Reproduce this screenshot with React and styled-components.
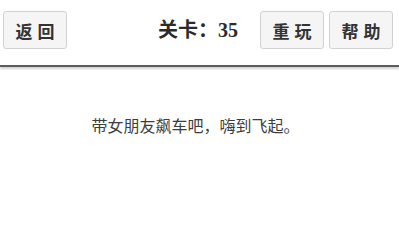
import styled, { createGlobalStyle } from 'styled-components'

const GlobalStyle = createGlobalStyle`
  html, body {
    margin: 0;
    padding: 0;
    background: #ffffff;
  }
  body {
    font-family: "Liberation Serif", "Noto Sans CJK SC", serif;
    color: #333333;
  }
`

const Page = styled.div`
  width: 399px;
  height: 229px;
  overflow: hidden;
`

const Header = styled.header`
  display: grid;
  grid-template-columns: 1fr auto 1fr;
  align-items: start;
  height: 54px;
  padding: 11px 6px 0 3px;
  border-bottom: 2px solid #5c5c5c;
  box-shadow: 0 2px 2px rgba(0, 0, 0, 0.18);
`

const ButtonGroup = styled.div`
  display: flex;
  gap: 5px;
  justify-content: ${(props) => (props.end ? 'flex-end' : 'flex-start')};
`

const GameButton = styled.button`
  width: 64px;
  height: 38px;
  padding: 0 0 0 5px;
  border: 1px solid #d2d2d2;
  border-radius: 3px;
  background: #f5f5f5;
  font-family: "Noto Sans CJK SC", sans-serif;
  font-size: 17px;
  font-weight: 700;
  letter-spacing: 5px;
  color: #333333;
  cursor: pointer;
`

const Title = styled.h1`
  margin: 0;
  line-height: 38px;
  font-family: "Liberation Serif", "Noto Sans CJK SC", serif;
  font-size: 20px;
  font-weight: 700;
  color: #2b2b2b;
`

const Message = styled.p`
  margin: 46px 0 0;
  padding-right: 8px;
  text-align: center;
  font-family: "Noto Sans CJK SC", sans-serif;
  font-size: 16px;
  color: #3d3d3d;
`

export default function App() {
  return (
    <Page>
      <GlobalStyle />
      <Header>
        <ButtonGroup>
          <GameButton>返回</GameButton>
        </ButtonGroup>
        <Title>关卡：35</Title>
        <ButtonGroup end>
          <GameButton>重玩</GameButton>
          <GameButton>帮助</GameButton>
        </ButtonGroup>
      </Header>
      <Message>带女朋友飙车吧，嗨到飞起。</Message>
    </Page>
  )
}
